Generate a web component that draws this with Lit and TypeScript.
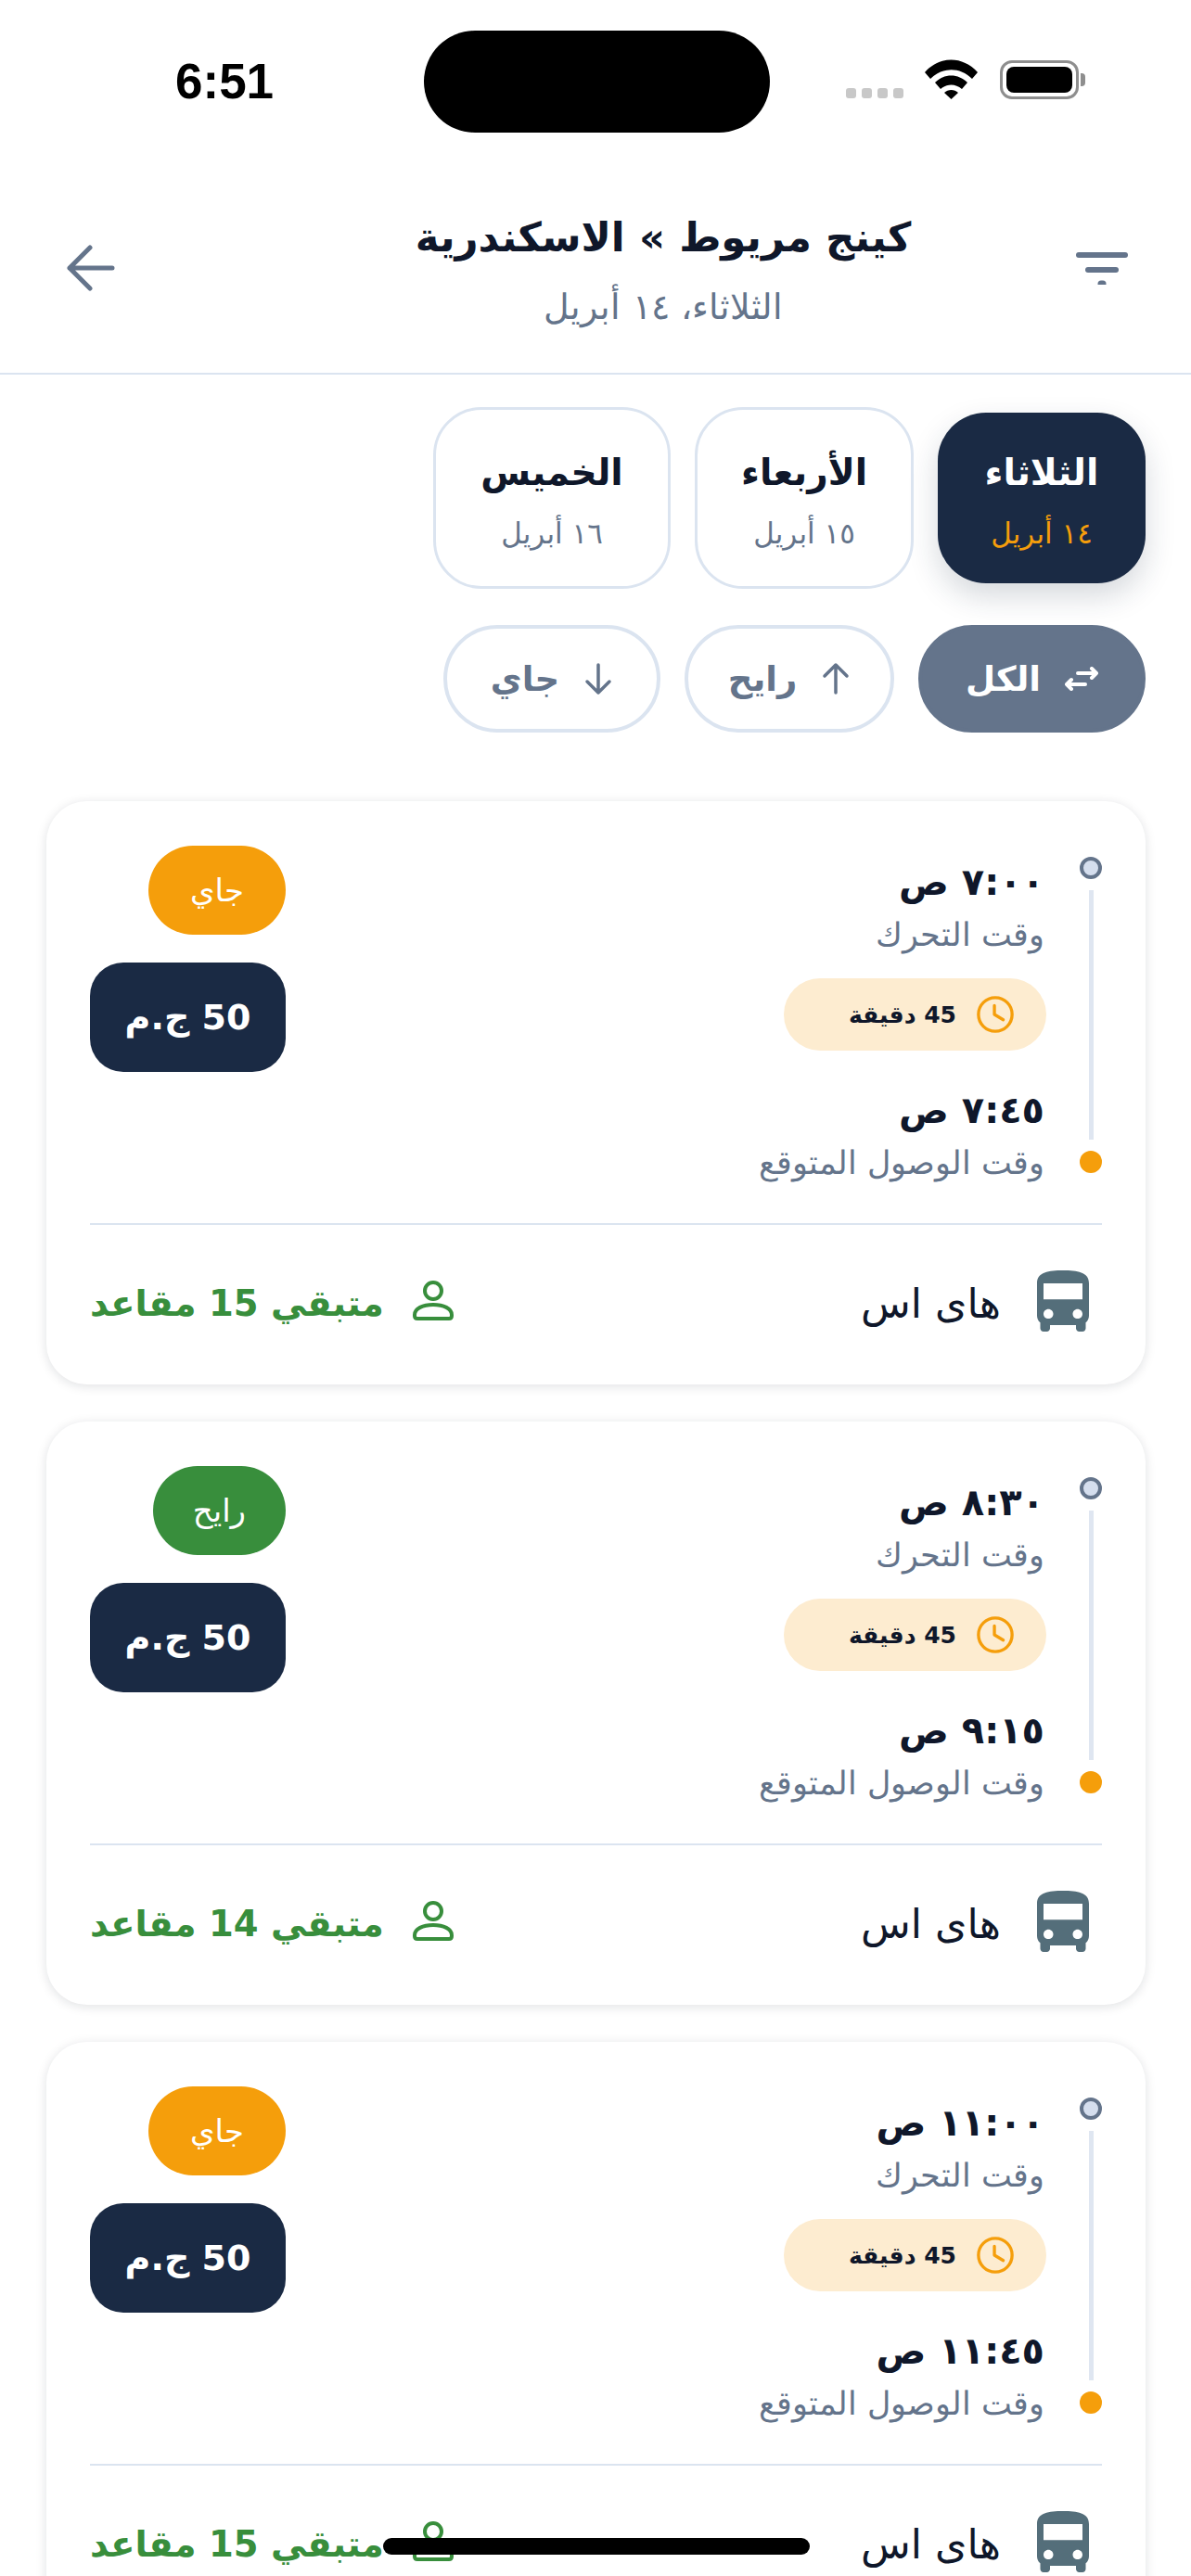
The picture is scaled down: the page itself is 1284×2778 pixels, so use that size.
import { LitElement, html, css, svg } from 'lit';
import { customElement } from 'lit/decorators.js';

interface Trip {
  start: string;
  end: string;
  direction: string;
  going: boolean;
  seats: number;
}

const trips: Trip[] = [
  { start: '٧:٠٠ ص', end: '٧:٤٥ ص', direction: 'جاي', going: false, seats: 15 },
  { start: '٨:٣٠ ص', end: '٩:١٥ ص', direction: 'رايح', going: true, seats: 14 },
  { start: '١١:٠٠ ص', end: '١١:٤٥ ص', direction: 'جاي', going: false, seats: 15 },
];

const days = [
  { name: 'الثلاثاء', date: '١٤ أبريل', active: true },
  { name: 'الأربعاء', date: '١٥ أبريل', active: false },
  { name: 'الخميس', date: '١٦ أبريل', active: false },
];

const busPath = 'M4 16c0 .88.39 1.67 1 2.22V20c0 .55.45 1 1 1h1c.55 0 1-.45 1-1v-1h8v1c0 .55.45 1 1 1h1c.55 0 1-.45 1-1v-1.78c.61-.55 1-1.34 1-2.22V6c0-3.5-3.58-4-8-4s-8 .5-8 4v10zm3.5 1c-.83 0-1.5-.67-1.5-1.5S6.67 14 7.5 14s1.5.67 1.5 1.5S8.33 17 7.5 17zm9 0c-.83 0-1.5-.67-1.5-1.5s.67-1.5 1.5-1.5 1.5.67 1.5 1.5-.67 1.5-1.5 1.5zm1.5-6H6V6h12v5z';

@customElement('app-root')
export class AppRoot extends LitElement {
  static styles = css`
    :host {
      display: block;
      position: relative;
      width: 1284px;
      height: 2778px;
      overflow: hidden;
      background: #fff;
      font-family: "DejaVu Sans", "Noto Sans", sans-serif;
      color: #0f172a;
    }

    .status {
      display: grid;
      grid-template-columns: 457px 373px 1fr;
      height: 176px;
      direction: ltr;
    }
    .clock {
      padding: 58px 0 0 189px;
      font: 600 53px/60px "Liberation Sans", sans-serif;
      color: #000;
    }
    .island {
      margin-top: 33px;
      height: 110px;
      border-radius: 55px;
      background: #000;
    }
    .status-icons {
      display: flex;
      align-items: flex-end;
      height: 107px;
      padding-left: 82px;
    }
    .signal { display: flex; gap: 6px; margin-bottom: 1px; margin-right: 23px; }
    .signal i { width: 11px; height: 11px; border-radius: 3px; background: #c8c8c8; }
    .wifi { margin-right: 24px; display: block; }
    .battery {
      box-sizing: border-box;
      width: 85px;
      height: 42px;
      border: 3px solid #8e8e8e;
      border-radius: 13px;
      padding: 4px;
    }
    .battery i { display: block; height: 100%; border-radius: 8px; background: #000; }
    .cap { width: 5px; height: 14px; margin: 0 0 14px 2px; border-radius: 0 4px 4px 0; background: #8e8e8e; }

    .header {
      display: flex;
      align-items: center;
      justify-content: space-between;
      height: 226px;
      padding: 0 68px 0 72px;
      border-bottom: 2px solid #dbe4f0;
      direction: rtl;
      box-sizing: content-box;
    }
    .header svg { display: block; fill: none; stroke: #64748b; stroke-linecap: round; stroke-linejoin: round; }
    .heading { flex: 1; padding-left: 146px; text-align: center; }
    .title { font-size: 43.500px; line-height: 60px; font-weight: 700; white-space: nowrap; }
    .sub { margin-top: 23px; font-size: 38px; line-height: 44px; color: #64748b; font-weight: 300; }

    .days, .filters {
      display: flex;
      padding: 0 49px;
      direction: rtl;
      gap: 26px;
    }
    .days { margin-top: 35px; align-items: center; height: 196px; }
    .day {
      box-sizing: border-box;
      width: 236px;
      height: 196px;
      border: 3px solid #dbe4f0;
      border-radius: 52px;
      text-align: center;
      padding-top: 44px;
    }
    .day.first { width: 256px; }
    .day.on {
      width: 224px;
      height: 184px;
      padding-top: 41px;
      border: none;
      background: #1a2a44;
      box-shadow: 0 14px 32px rgba(26, 42, 68, 0.18);
    }
    .day b { display: block; font-size: 39px; line-height: 48px; font-weight: 700; white-space: nowrap; }
    .day span { display: block; margin-top: 22px; font-size: 31px; line-height: 38px; color: #64748b; white-space: nowrap; }
    .day.on b { color: #fff; }
    .day.on span { color: #f59e0b; }

    .filters { margin-top: 39px; }
    .chip {
      box-sizing: border-box;
      display: flex;
      align-items: center;
      justify-content: center;
      gap: 26px;
      height: 116px;
      border: 4px solid #dbe4f0;
      border-radius: 58px;
      color: #64748b;
      font-size: 37px;
      font-weight: 700;
    }
    .chip svg { display: block; fill: none; stroke: currentColor; stroke-width: 3.5; stroke-linecap: round; stroke-linejoin: round; }
    .chip.on { background: #64748b; border-color: #64748b; color: #fff; }

    .list {
      display: flex;
      flex-direction: column;
      gap: 40px;
      margin-top: 74px;
      padding: 0 49px 0 50px;
      direction: rtl;
    }
    .card {
      background: #fff;
      border-radius: 44px;
      padding: 48px 47px 57px;
      box-shadow: 0 2px 12px rgba(15, 23, 42, 0.13);
    }
    .top { display: flex; justify-content: space-between; height: 407px; }
    .route { display: flex; gap: 38px; }
    .rail { display: flex; flex-direction: column; align-items: center; width: 24px; padding-top: 12px; }
    .rail .from { box-sizing: border-box; width: 24px; height: 24px; border: 4px solid #64748b; border-radius: 50%; background: #d5deee; }
    .rail .line { width: 5px; height: 269px; margin: 12px 0; background: #dfe6f1; }
    .rail .to { width: 24px; height: 24px; border-radius: 50%; background: #f59e0b; }
    .times { padding-top: 6px; }
    .time { font-size: 40px; line-height: 66px; font-weight: 700; white-space: nowrap; }
    .label { font-size: 35px; line-height: 48px; color: #64748b; font-weight: 300; white-space: nowrap; }
    .duration {
      display: flex;
      align-items: center;
      box-sizing: border-box;
      width: 283px;
      gap: 21px;
      height: 78px;
      margin: 23px -2px 31px 0;
      padding: 0 34px 0 0;
      border-radius: 39px;
      background: #fdecd0;
      font-size: 25px;
      font-weight: 700;
      white-space: nowrap;
    }
    .duration svg { display: block; fill: none; stroke: #f59e0b; stroke-width: 3.5; stroke-linecap: round; stroke-linejoin: round; }
    .meta { display: flex; flex-direction: column; align-items: flex-start; gap: 30px; width: 211px; }
    .badge {
      height: 96px;
      padding: 0 45px;
      border-radius: 48px;
      color: #fff;
      background: #f59e0b;
      font-size: 34px;
      line-height: 96px;
    }
    .badge.go { background: #388e3c; padding: 0 43px; }
    .price {
      box-sizing: border-box;
      width: 211px;
      height: 118px;
      border-radius: 36px;
      background: #1a2a44;
      color: #fff;
      text-align: center;
      font-size: 38px;
      font-weight: 700;
      line-height: 118px;
    }
    .foot {
      display: flex;
      align-items: center;
      justify-content: space-between;
      padding-top: 49px;
      border-top: 2px solid #dbe4f0;
    }
    .bus, .seats { display: flex; align-items: center; }
    .bus span, .seats span { padding-top: 4px; }
    .bus { gap: 39px; padding-right: 14px; font-size: 44px; }
    .bus svg { display: block; fill: #546e7a; }
    .seats { gap: 30px; color: #388e3c; font-size: 38.500px; font-weight: 700; }
    .seats svg { display: block; fill: none; stroke: #388e3c; stroke-width: 4; }

    .home {
      position: absolute;
      left: 413px;
      bottom: 23px;
      width: 460px;
      height: 18px;
      border-radius: 9px;
      background: #000;
    }
  `;

  private clockIcon() {
    return svg`<svg width="42" height="42" viewBox="0 0 44 44">
      <circle cx="22" cy="22" r="19"></circle><path d="M21 12v10l10 6"></path>
    </svg>`;
  }

  private renderCard(t: Trip) {
    return html`
      <div class="card">
        <div class="top">
          <div class="route">
            <div class="rail"><i class="from"></i><i class="line"></i><i class="to"></i></div>
            <div class="times">
              <div class="time">${t.start}</div>
              <div class="label">وقت التحرك</div>
              <div class="duration">${this.clockIcon()}<span>45 دقيقة</span></div>
              <div class="time">${t.end}</div>
              <div class="label">وقت الوصول المتوقع</div>
            </div>
          </div>
          <div class="meta">
            <div class="badge ${t.going ? 'go' : ''}">${t.direction}</div>
            <div class="price">50 ج.م</div>
          </div>
        </div>
        <div class="foot">
          <div class="bus">
            <svg width="56" height="66" viewBox="4 2 16 19" preserveAspectRatio="none"><path d=${busPath}></path></svg>
            <span>هاى اس</span>
          </div>
          <div class="seats">
            <svg width="46" height="46" viewBox="0 0 46 46">
              <circle cx="23" cy="12" r="9"></circle>
              <path d="M3 38c0-7 9-11 20-11s20 4 20 11v1c0 2-1 3-3 3H6c-2 0-3-1-3-3z"></path>
            </svg>
            <span>متبقي ${t.seats} مقاعد</span>
          </div>
        </div>
      </div>
    `;
  }

  render() {
    return html`
      <div class="status">
        <div class="clock">6:51</div>
        <div class="island"></div>
        <div class="status-icons">
          <div class="signal"><i></i><i></i><i></i><i></i></div>
          <svg class="wifi" width="57" height="43" viewBox="0 0 57 43">
            <path d="M0 14C16-4 41-4 57 14l-6 7C38 8 19 8 6 21z"></path>
            <path d="M11 25c10-10 25-10 35 0l-6 7c-7-6-16-6-23 0z"></path>
            <path d="M21 36c4-4 11-4 15 0l-7.500 7z"></path>
          </svg>
          <div class="battery"><i></i></div>
          <div class="cap"></div>
        </div>
      </div>

      <div class="header">
        <svg width="56" height="36" viewBox="0 0 56 36">
          <path d="M3 4h50" stroke-width="6"></path>
          <path d="M13 20h30" stroke-width="6"></path>
          <path d="M27 35h2" stroke-width="7"></path>
        </svg>
        <div class="heading">
          <div class="title">كينج مريوط » الاسكندرية</div>
          <div class="sub">الثلاثاء، ١٤ أبريل</div>
        </div>
        <svg width="52" height="50" viewBox="0 0 52 50">
          <path d="M49 25H3M25 3L3 25l22 22" stroke-width="5"></path>
        </svg>
      </div>

      <div class="days">
        ${days.map(d => html`
          <div class="day ${d.active ? 'on' : ''} ${d.name === 'الخميس' ? 'first' : ''}">
            <b>${d.name}</b><span>${d.date}</span>
          </div>
        `)}
      </div>

      <div class="filters">
        <div class="chip on" style="width: 245px">
          <svg width="36" height="26" viewBox="0 0 36 26">
            <path d="M14 7h20M29 2l5 5-5 5" stroke-width="4"></path>
            <path d="M22 19H2M7 14l-5 5 5 5" stroke-width="4"></path>
          </svg>
          <span>الكل</span>
        </div>
        <div class="chip" style="width: 226px">
          <svg width="32" height="36" viewBox="0 0 32 36"><path d="M16 33V3M4 15L16 3l12 12"></path></svg>
          <span>رايح</span>
        </div>
        <div class="chip" style="width: 234px">
          <svg width="32" height="36" viewBox="0 0 32 36"><path d="M16 3v30M4 21l12 12 12-12"></path></svg>
          <span>جاي</span>
        </div>
      </div>

      <div class="list">${trips.map(t => this.renderCard(t))}</div>
      <div class="home"></div>
    `;
  }
}
